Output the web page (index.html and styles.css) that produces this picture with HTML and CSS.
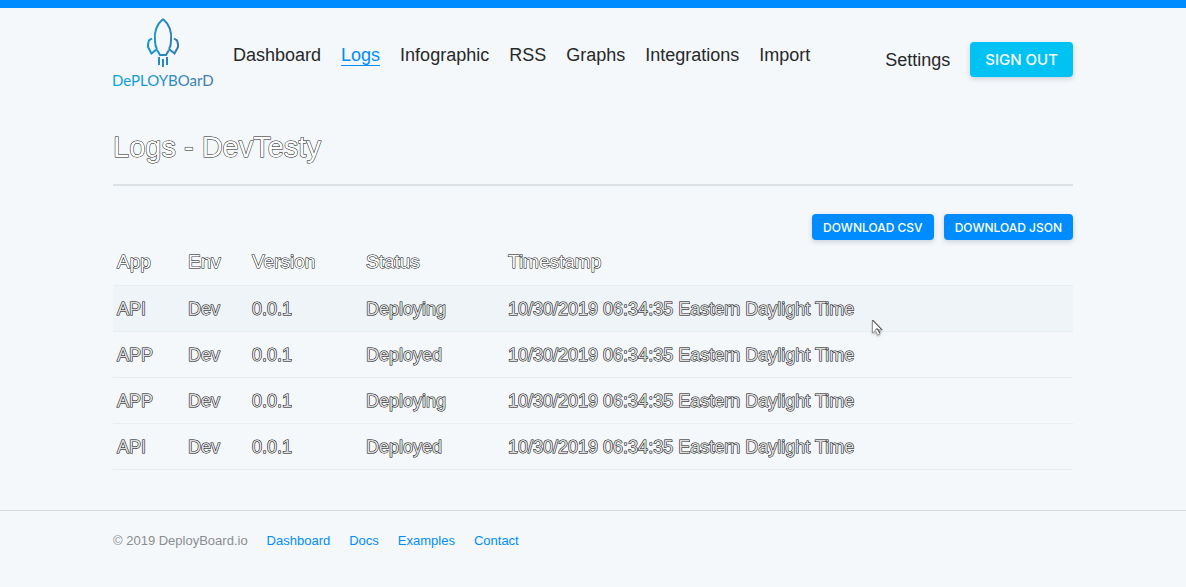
FILE: index.html
```html
<!DOCTYPE html>
<html lang="en">
<head>
<meta charset="utf-8">
<meta name="viewport" content="width=device-width, initial-scale=1">
<title>DeployBoard Logs</title>
<link rel="stylesheet" href="styles.css">
</head>
<body>
<header class="container header">
  <a class="logo" href="#" aria-label="DeployBoard">
    <svg class="logo-art" viewBox="0 0 102 74" width="102" height="74">
      <defs>
        <linearGradient id="rocket" gradientUnits="userSpaceOnUse" x1="34" y1="0" x2="67" y2="0"><stop offset="0" stop-color="#109bd0"/><stop offset="1" stop-color="#3978ad"/></linearGradient>
        <linearGradient id="word" gradientUnits="userSpaceOnUse" x1="0" y1="0" x2="102" y2="0"><stop offset="0" stop-color="#08a5dc"/><stop offset="1" stop-color="#4876a8"/></linearGradient>
      </defs>
      <g fill="none" stroke="url(#rocket)" stroke-width="2" stroke-linejoin="miter">
        <path d="M50 3C43 9 41 17 42 25Q42 30 44 33M50 3C57 9 59 17 58 25Q58 30 56 33M44 34L47 39H53L56 34"/>
        <path d="M39 22.500L36 24.500L35 28V31L38.500 37.500L44 33M61 22.500L64 24.500L65 28V31L61.500 37.500L56 33"/>
        <path d="M46 41V49M50 43V51M54 41V49"/>
      </g>
      <text class="logo-word" x="-1" y="70" fill="url(#word)">DePLOYBOarD</text>
    </svg>
  </a>
  <nav class="nav">
    <a href="#">Dashboard</a>
    <a class="active" href="#">Logs</a>
    <a href="#">Infographic</a>
    <a href="#">RSS</a>
    <a href="#">Graphs</a>
    <a href="#">Integrations</a>
    <a href="#">Import</a>
  </nav>
  <div class="account">
    <a href="#">Settings</a>
    <button class="btn btn-signout" type="button">SIGN OUT</button>
  </div>
</header>
<main class="container">
  <h1 class="title">Logs - DevTesty</h1>
  <div class="downloads">
    <button class="btn" type="button">DOWNLOAD CSV</button>
    <button class="btn" type="button">DOWNLOAD JSON</button>
  </div>
  <table class="logs">
    <colgroup><col class="col-app"><col class="col-env"><col class="col-version"><col class="col-status"><col></colgroup>
    <thead>
      <tr><th>App</th><th>Env</th><th>Version</th><th>Status</th><th>Timestamp</th></tr>
    </thead>
    <tbody>
      <tr class="hovered"><td>API</td><td>Dev</td><td>0.0.1</td><td>Deploying</td><td>10/30/2019 06:34:35 Eastern Daylight Time</td></tr>
      <tr><td>APP</td><td>Dev</td><td>0.0.1</td><td>Deployed</td><td>10/30/2019 06:34:35 Eastern Daylight Time</td></tr>
      <tr><td>APP</td><td>Dev</td><td>0.0.1</td><td>Deploying</td><td>10/30/2019 06:34:35 Eastern Daylight Time</td></tr>
      <tr><td>API</td><td>Dev</td><td>0.0.1</td><td>Deployed</td><td>10/30/2019 06:34:35 Eastern Daylight Time</td></tr>
    </tbody>
  </table>
</main>
<footer class="footer">
  <div class="container footer-row">
    <span>© 2019 DeployBoard.io</span>
    <a href="#">Dashboard</a>
    <a href="#">Docs</a>
    <a href="#">Examples</a>
    <a href="#">Contact</a>
  </div>
</footer>
<svg class="cursor" viewBox="0 0 14 20" width="14" height="20" aria-hidden="true">
  <path d="M1.500 1V14L4.500 11.500L6.500 16L9 15L7.200 10.800H11Z" fill="#fff" stroke="#999" stroke-width="1"/>
  <path d="M1.500 1L11 10.800M4.500 11L6 9.500L9 14" fill="none" stroke="#333" stroke-width="1"/>
</svg>
</body>
</html>
```
FILE: styles.css
```css
* {
  box-sizing: border-box;
}

body {
  margin: 0;
  border-top: 8px solid #008cff;
  background: #f4f8fb;
  color: #282828;
  font: 18px/24px "Liberation Sans", Arial, sans-serif;
}

a {
  color: inherit;
  text-decoration: none;
}

.container {
  width: 100%;
  max-width: 960px;
  margin: 0 auto;
}

.header {
  display: flex;
  align-items: flex-start;
  padding-top: 8px;
}

.logo {
  margin-right: 18px;
}

.logo-art {
  display: block;
}

.logo-word {
  font: 15px Lato, sans-serif;
}

.nav {
  display: flex;
  gap: 20px;
  padding-top: 29px;
  line-height: 20px;
}

.nav .active {
  color: #008cff;
  border-bottom: 1px solid #008cff;
}

.account {
  display: flex;
  align-items: center;
  gap: 20px;
  margin-left: auto;
  padding-top: 26px;
}

.btn {
  height: 26px;
  padding: 0 11px;
  border: 0;
  border-radius: 4px;
  background: #008cff;
  box-shadow: 0 2px 5px rgba(40, 60, 90, 0.2);
  color: #fff;
  font: 500 12px Inter, sans-serif;
}

.btn-signout {
  height: 35px;
  padding: 0 15px;
  background: #00c3f3;
  font-size: 15px;
}

.title {
  margin: 37px 0 28px;
  padding-bottom: 17px;
  border-bottom: 2px solid #dce1e5;
  color: #fff;
  font-size: 29px;
  font-weight: 400;
  line-height: 40px;
  -webkit-text-stroke: 1px #111;
  paint-order: stroke fill;
}

.downloads {
  display: flex;
  justify-content: flex-end;
  gap: 10px;
}

.logs {
  width: 100%;
  border-collapse: collapse;
  table-layout: fixed;
  text-align: left;
}

.logs th,
.logs td {
  height: 46px;
  padding: 2px 4px 0;
  border-bottom: 1px solid #e8edf0;
  color: #ddd;
  font-weight: 400;
  -webkit-text-stroke: 1px #000;
  paint-order: stroke fill;
}

.logs th {
  height: 45px;
  padding-top: 0;
  color: #fff;
  font-size: 19px;
}

.hovered {
  background: #eff4f8;
}

.col-app {
  width: 71px;
}

.col-env {
  width: 64px;
}

.col-version {
  width: 114px;
}

.col-status {
  width: 142px;
}

.footer {
  margin-top: 40px;
  padding-top: 20px;
  border-top: 1px solid #d6dce0;
  color: #8b8d8f;
  font-size: 13px;
  line-height: 20px;
}

.footer-row {
  display: flex;
  gap: 19px;
}

.footer a {
  color: #008cff;
}

.cursor {
  position: absolute;
  left: 871px;
  top: 319px;
  filter: drop-shadow(0 1px 1px rgba(0, 0, 0, 0.3));
  pointer-events: none;
}
```
